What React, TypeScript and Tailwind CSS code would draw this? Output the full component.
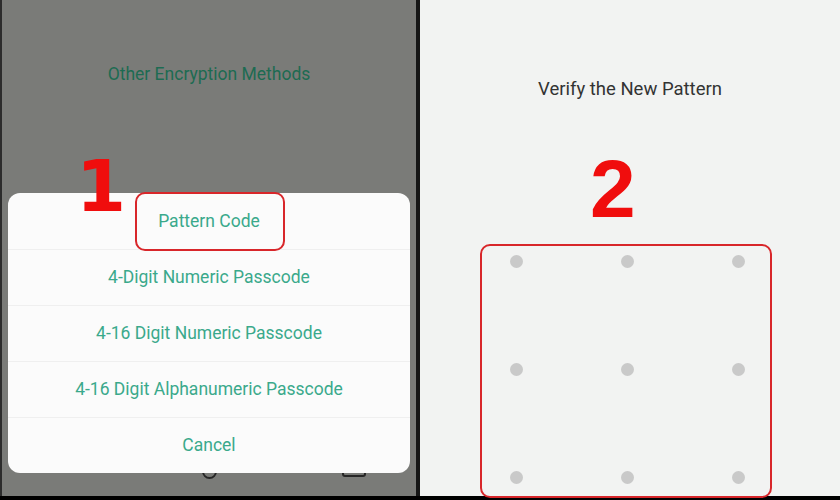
const options = [
  "Pattern Code",
  "4-Digit Numeric Passcode",
  "4-16 Digit Numeric Passcode",
  "4-16 Digit Alphanumeric Passcode",
  "Cancel",
];

const rows = [0, 1, 2];

function MethodSheet() {
  return (
    <div className="relative z-10 mx-[6px] flex h-[280px] flex-col overflow-visible rounded-[12px] bg-[#fbfbfb]">
      {options.map((label, i) => (
        <div
          key={label}
          className={
            "flex h-[56px] items-center justify-center text-[17.5px] text-[#3aa98b] " +
            (i > 0 ? "border-t border-[#efefef]" : "")
          }
        >
          {label}
        </div>
      ))}
      {/* annotation: highlight around first option */}
      <div className="absolute left-[127px] top-[-1px] h-[59px] w-[150px] rounded-[10px] border-2 border-[#d8262a]" />
    </div>
  );
}

function PatternGrid() {
  return (
    <div className="ml-[90px] mt-[153px] flex flex-col gap-y-[95px] self-start">
      {rows.map((r) => (
        <div key={r} className="flex gap-x-[98px]">
          {rows.map((c) => (
            <div key={c} className="h-[13px] w-[13px] rounded-full bg-[#c9c9c9]" />
          ))}
        </div>
      ))}
    </div>
  );
}

export default function App() {
  return (
    <div
      className="flex h-[500px] w-[840px] flex-col bg-black"
      style={{ fontFamily: "Roboto, 'Liberation Sans', sans-serif" }}
    >
      <div className="flex h-[496px]">
        {/* left phone screen */}
        <div className="relative flex w-[416px] flex-col border-l-2 border-[#2c2c2c] bg-[#7a7b78]">
          <div className="mt-[63px] text-center text-[17.5px] leading-[22px] text-[#1d6b52]">
            Other Encryption Methods
          </div>
          <div className="flex-1" />
          <MethodSheet />
          <div className="relative h-[23px]">
            <div className="absolute left-[200px] top-[-10px] h-[16px] w-[15px] rounded-full border-2 border-[#262626]" />
            <div className="absolute left-[340px] top-[-10px] h-[14px] w-[24px] rounded-[3px] border-2 border-[#262626]" />
          </div>
          <div
            className="absolute left-[74px] top-[150px] z-20 text-[72px] font-bold leading-[72px] text-[#f00d0d]"
            style={{ fontFamily: "'DejaVu Sans', sans-serif" }}
          >
            1
          </div>
        </div>
        <div className="w-[4px] bg-[#161616]" />
        {/* right phone screen */}
        <div className="relative flex flex-1 flex-col items-center bg-[#f2f3f2]">
          <div className="mt-[76px] text-[18.5px] leading-[26px] text-[#333333]">Verify the New Pattern</div>
          <PatternGrid />
          <div
            className="absolute left-[170px] top-[148px] text-[82px] font-bold leading-[82px] text-[#f00d0d]"
            style={{ fontFamily: "'Liberation Sans', sans-serif" }}
          >
            2
          </div>
          <div className="absolute left-[60px] top-[244px] h-[254px] w-[292px] rounded-[10px] border-2 border-[#d8262a]" />
        </div>
      </div>
    </div>
  );
}
